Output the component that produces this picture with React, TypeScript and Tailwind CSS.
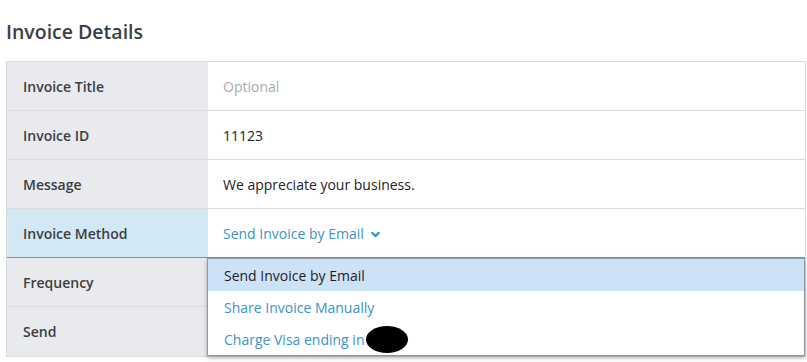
import { ChevronDown } from "lucide-react"

const ROWS = [
    { label: "Invoice Title", value: "Optional", kind: "placeholder" },
    { label: "Invoice ID", value: "11123", kind: "text" },
    { label: "Message", value: "We appreciate your business.", kind: "text" },
    { label: "Invoice Method", value: "Send Invoice by Email", kind: "select" },
    { label: "Frequency", value: "", kind: "text" },
    { label: "Send", value: "", kind: "text" },
]

const OPTIONS = ["Send Invoice by Email", "Share Invoice Manually", "Charge Visa ending in"]

const Row = ({ row, last }: { row: (typeof ROWS)[number]; last: boolean }) => {
    const active = row.kind === "select"
    return (
        <div
            className={`flex h-[49px] ${last ? "" : "border-b"} ${
                active ? "border-[#55a3d3]" : "border-[#d9dbdf]"
            }`}
        >
            <div
                className={`w-[201px] shrink-0 flex items-center pl-[16px] text-[14px] font-semibold text-[#3b3e43] ${
                    active ? "bg-[#d3e8f5]" : "bg-[#e9eaee]"
                }`}
            >
                {row.label}
            </div>
            <div className="flex-1 flex items-center pl-[15px] text-[14px]">
                {row.kind === "placeholder" && <span className="text-[#a8abb0]">{row.value}</span>}
                {row.kind === "text" && <span className="text-[#1f2124]">{row.value}</span>}
                {row.kind === "select" && (
                    <span className="flex items-center gap-[5px] text-[#3a94c9]">
                        {row.value}
                        <ChevronDown className="w-[13px] h-[13px] mt-[2px]" strokeWidth={4} />
                    </span>
                )}
            </div>
        </div>
    )
}

export default function App() {
    return (
        <div
            className="w-[807px] h-[362px] bg-white overflow-hidden"
            style={{ fontFamily: '"Open Sans", "Liberation Sans", sans-serif' }}
        >
            <h2 className="pl-[6px] pt-[19px] h-[61px] text-[19.5px] font-semibold text-[#3b3e43] leading-[26px]">
                Invoice Details
            </h2>
            <div className="relative ml-[6px] w-[800px] border border-[#d9dbdf]">
                {ROWS.map((row, i) => (
                    <Row key={row.label} row={row} last={i === ROWS.length - 1} />
                ))}
                <div className="absolute left-[200px] top-[196px] w-[598px] bg-white border border-[#8f9aa8] shadow-[0_2px_4px_rgba(0,0,0,0.3)] text-[14px]">
                    {OPTIONS.map((opt, i) => (
                        <div
                            key={opt}
                            className={`h-[32px] flex items-center pl-[16px] ${
                                i === 0 ? "bg-[#cce2f6] text-[#1f2124]" : "text-[#3a94c9]"
                            }`}
                        >
                            {opt}
                            {i === 2 && <span className="ml-[2px] mt-[1px] w-[42px] h-[27px] rounded-[50%] bg-black" />}
                        </div>
                    ))}
                </div>
            </div>
        </div>
    )
}
